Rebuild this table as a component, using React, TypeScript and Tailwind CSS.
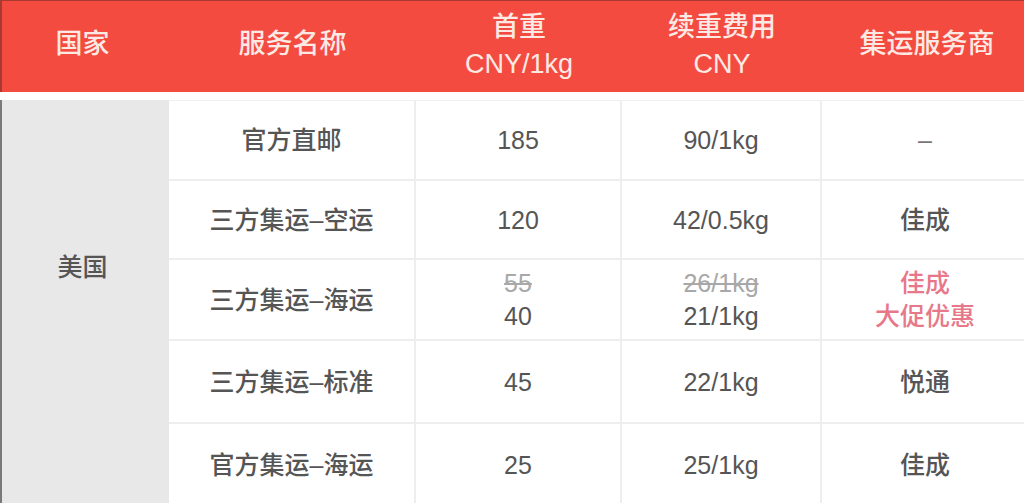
import React from "react";

const font = { fontFamily: '"Liberation Sans", "Noto Sans CJK SC", sans-serif' };

type Row = { h: string; name: string; first: React.ReactNode; cont: React.ReactNode; vendor: React.ReactNode };

const rows: Row[] = [
  { h: "h-[80px]", name: "官方直邮", first: "185", cont: "90/1kg", vendor: <span className="text-[#777]">–</span> },
  { h: "h-[79px]", name: "三方集运–空运", first: "120", cont: "42/0.5kg", vendor: "佳成" },
  {
    h: "h-[81px]",
    name: "三方集运–海运",
    first: (
      <div className="flex flex-col items-center leading-[33px]">
        <span className="text-[#a8a8a8] line-through decoration-[#a8a8a8]">55</span>
        <span>40</span>
      </div>
    ),
    cont: (
      <div className="flex flex-col items-center leading-[33px]">
        <span className="text-[#a8a8a8] line-through decoration-[#a8a8a8]">26/1kg</span>
        <span>21/1kg</span>
      </div>
    ),
    vendor: (
      <div className="flex flex-col items-center leading-[33px] text-[#e7788a]">
        <span>佳成</span>
        <span>大促优惠</span>
      </div>
    ),
  },
  { h: "h-[83px]", name: "三方集运–标准", first: "45", cont: "22/1kg", vendor: "悦通" },
  { h: "h-[84px]", name: "官方集运–海运", first: "25", cont: "25/1kg", vendor: "佳成" },
];

export default function App() {
  return (
    <div className="w-[1024px] h-[503px] overflow-hidden bg-white" style={font}>
      <div className="h-[92px] bg-[#f44b41] border-t border-l-2 border-[#a93a31] grid grid-cols-[167px_247px_206px_200px_202px] text-[#fde9e4] text-[27px] leading-[37px] font-medium">
        <div className="flex items-center justify-center pb-[4px] pr-[6px]">国家</div>
        <div className="flex items-center justify-center pb-[4px]">服务名称</div>
        <div className="flex flex-col items-center justify-center pb-[2px]">
          <span>首重</span>
          <span>CNY/1kg</span>
        </div>
        <div className="flex flex-col items-center justify-center pb-[2px]">
          <span>续重费用</span>
          <span>CNY</span>
        </div>
        <div className="flex items-center justify-center pb-[4px] pl-[8px]">集运服务商</div>
      </div>
      <div className="h-[8px]" />
      <div className="flex">
        <div className="w-[169px] h-[403px] bg-[#e8e8e8] border-l-2 border-[#7a7a7a] flex justify-center pt-[152px] pr-[6px] text-[25px] text-[#555] leading-[30px] font-medium">
          美国
        </div>
        <div className="flex-1 flex flex-col border-t border-[#f0f0f0]">
          {rows.map((r, i) => (
            <div
              key={i}
              className={`${r.h} shrink-0 grid grid-cols-[247px_206px_200px_202px] border-b-2 border-[#eeeeee] text-[25px] text-[#555] leading-[30px] font-medium`}
            >
              <div className="flex items-center justify-center border-r-2 border-[#eeeeee]">{r.name}</div>
              <div className="flex items-center justify-center border-r-2 border-[#eeeeee]">{r.first}</div>
              <div className="flex items-center justify-center border-r-2 border-[#eeeeee]">{r.cont}</div>
              <div className="flex items-center justify-center pl-[4px]">{r.vendor}</div>
            </div>
          ))}
        </div>
      </div>
    </div>
  );
}
